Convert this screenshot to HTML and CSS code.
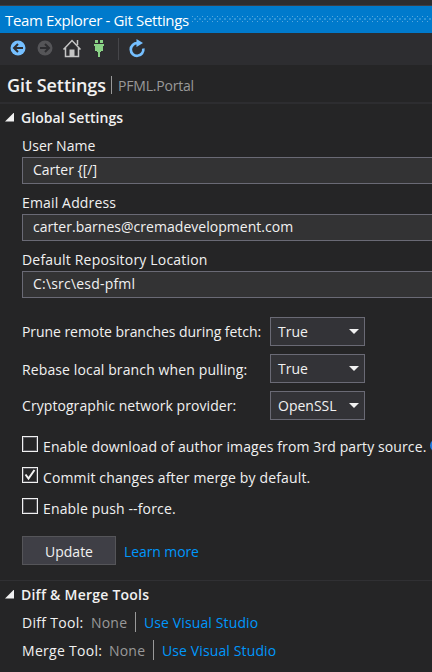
FILE: index.html
```html
<!DOCTYPE html>
<html lang="en">
<head>
<meta charset="utf-8">
<title>Team Explorer - Git Settings</title>
<link rel="stylesheet" href="styles.css">
</head>
<body>
<main class="panel">
  <header class="titlebar"><span class="title">Team Explorer - Git Settings</span>
    <svg class="grip" width="240" height="7"><defs><pattern id="dots" width="5" height="7" patternUnits="userSpaceOnUse"><path fill="#59a8dd" d="M0 1h1v1H0zM0 6h1v1H0z"/><path fill="#3094d8" d="M2 3h2v2H2z"/></pattern></defs><rect width="240" height="7" fill="url(#dots)"/></svg>
  </header>
  <nav class="toolbar">
    <svg width="112" height="32" viewBox="0 33 112 32">
      <circle cx="18" cy="48" r="7.500" fill="#75bfff"/>
      <path d="M23 48h-8M18 44l-4 4 4 4" fill="none" stroke="#2d2d30" stroke-width="2"/>
      <circle cx="45" cy="48" r="7.500" fill="#555558"/>
      <path d="M40 48h8M45 44l4 4-4 4" fill="none" stroke="#2d2d30" stroke-width="2"/>
      <path d="M65.500 48v8.500h13V48M63.500 49.500l8.500-9 8.500 9M77.500 45v-5" fill="none" stroke="#c5c5c5" stroke-width="1.500"/>
      <path d="M69.500 49.500h5V57h-5z" fill="#c5c5c5"/>
      <path d="M95 40h3v3h-3zM100 40h3v3h-3zM94 44h10v2h-1v5h-2v1h-1v5h-2v-5h-1v-1h-2v-5h-1z" fill="#89d185"/>
    </svg>
    <i class="tool-sep"></i>
    <svg class="refresh" width="20" height="32" viewBox="126 33 20 32">
      <path d="M136.500 43.200A6.300 6.300 0 1 0 142.300 48.500" fill="none" stroke="#75bfff" stroke-width="2.700"/>
      <path d="M135.500 39l6.500 4-6.500 4z" fill="#75bfff"/>
    </svg>
  </nav>
  <div class="page-head"><h1>Git Settings</h1><i class="head-sep"></i><span class="project">PFML.Portal</span></div>
  <section class="global">
    <h2><i class="expander"></i><span class="t-global">Global Settings</span></h2>
    <label class="field"><span class="caption">User Name</span><span class="input">Carter {[/]</span></label>
    <label class="field"><span class="caption t-email">Email Address</span><span class="input t-mail">carter.barnes@cremadevelopment.com</span></label>
    <label class="field"><span class="caption t-loc">Default Repository Location</span><span class="input t-path">C:\src\esd-pfml</span></label>
    <div class="choices">
      <div class="choice"><span class="t-prune">Prune remote branches during fetch:</span><span class="select">True<i class="caret"></i></span></div>
      <div class="choice rebase"><span class="t-rebase">Rebase local branch when pulling:</span><span class="select">True<i class="caret"></i></span></div>
      <div class="choice"><span class="t-crypto">Cryptographic network provider:</span><span class="select">OpenSSL<i class="caret"></i></span></div>
    </div>
    <div class="checks">
      <div class="check"><i class="box"></i><span class="t-images">Enable download of author images from 3rd party source.</span><i class="info"></i></div>
      <div class="check"><i class="box"><svg width="12" height="12"><path d="M1.500 5.500l3 4L10.500 1" fill="none" stroke="#f1f1f1" stroke-width="2"/></svg></i><span class="t-commit">Commit changes after merge by default.</span></div>
      <div class="check"><i class="box"></i><span class="t-commit">Enable push --force.</span></div>
    </div>
    <div class="actions"><span class="button">Update</span><a class="t-learn">Learn more</a></div>
  </section>
  <section class="tools">
    <h2><i class="expander"></i><span class="t-diff">Diff &amp; Merge Tools</span></h2>
    <div class="tool"><span class="tool-name diff-name">Diff Tool:</span><span class="none">None</span><i class="tool-line"></i><a class="t-vs">Use Visual Studio</a></div>
    <div class="tool"><span class="tool-name merge-name">Merge Tool:</span><span class="none">None</span><i class="tool-line"></i><a class="t-vs">Use Visual Studio</a></div>
  </section>
</main>
</body>
</html>
```
FILE: styles.css
```css
* { box-sizing: border-box; }
body { margin: 0; background: #252526; color: #f1f1f1; font: 14px/20px "Open Sans", sans-serif; overflow: hidden; }
i { font-style: normal; flex-shrink: 0; }
svg { display: block; flex-shrink: 0; }
h1, h2 { margin: 0; }
a { color: #0097fb; }
.panel { width: 432px; height: 672px; overflow: hidden; white-space: nowrap; border-top: 5px solid #2d2d30; }
.titlebar { height: 28px; border-top: 1px solid #3f3f46; background: #007acc; display: flex; align-items: center; padding-left: 5px; color: #fff; }
.title { width: 193px; font-size: 15px; letter-spacing: -.36px; }
.grip { margin-top: -2px; }
.toolbar { height: 32px; background: #2d2d30; display: flex; align-items: center; }
.tool-sep { width: 1px; height: 22px; background: #46464a; margin: 0 8px 0 6px; }
.page-head { height: 39px; border-bottom: 2px solid #2d2d30; display: flex; align-items: center; padding: 3px 0 0 7px; }
h1 { width: 104px; font-size: 18px; font-weight: 600; letter-spacing: -.05px; }
.head-sep { width: 1px; height: 18px; background: #999; margin-right: 6px; }
.project { color: #999; letter-spacing: -.2px; padding-top: 2px; }
h2 { height: 27px; display: flex; align-items: center; font-size: 14px; font-weight: 600; }
.expander { width: 9px; height: 9px; margin: -1px 7px 0 5px; background: #f1f1f1; clip-path: polygon(100% 0, 100% 100%, 0 100%); }
.field { display: flex; flex-direction: column; height: 57px; margin-left: 22px; padding-top: 5px; }
.caption { height: 21px; }
.input { height: 27px; border: 1px solid #6a6a75; border-right: 0; background: #333334; padding: 2px 0 0 10px; }
.choices { padding: 15px 0 0 22px; }
.choice { height: 37px; display: flex; align-items: flex-start; }
.choice > span:first-child { width: 248px; padding-top: 5px; }
.rebase > span:first-child { padding-top: 6px; }
.select { width: 95px; height: 29px; border: 1px solid #6a6a75; background: #333337; display: flex; align-items: center; justify-content: space-between; padding: 0 5px 0 7px; }
.caret { width: 10px; height: 5px; background: #f1f1f1; clip-path: polygon(0 0, 100% 0, 50% 100%); }
.checks { padding: 8px 0 0 22px; }
.check { height: 31px; display: flex; align-items: flex-start; }
.check > span { margin-left: 5px; padding-top: 1px; }
.box { width: 16px; height: 16px; border: 1px solid #f1f1f1; outline: 1px solid #55555a; outline-offset: -2px; padding: 1px; }
.info { width: 13px; height: 13px; border-radius: 50%; background: #1e7be0; margin: 3px 0 0 4px; }
.actions { height: 51px; display: flex; align-items: flex-start; padding: 7px 0 0 22px; }
.button { width: 94px; height: 29px; border: 1px solid #555559; background: #3f3f46; text-align: center; line-height: 29px; margin-right: 8px; }
.actions a { padding-top: 6px; }
.tools { border-top: 1px solid #303033; }
.tool { height: 28px; display: flex; align-items: center; padding-left: 22px; }
.tool > span, .tool > a { padding-top: 1px; }
.tool-name { letter-spacing: .3px; }
.diff-name { width: 69px; }
.merge-name { width: 87px; }
.none { width: 44px; color: #999; letter-spacing: .2px; }
.tool-line { width: 1px; height: 20px; background: #999; margin-right: 8px; }

/* Tracking per label */
.t-global { letter-spacing: .07px; }
.t-email { letter-spacing: .15px; }
.t-loc { letter-spacing: .19px; }
.t-mail { letter-spacing: .03px; }
.t-path { letter-spacing: .2px; }
.t-prune { letter-spacing: -.06px; }
.t-rebase { letter-spacing: .12px; }
.t-crypto { letter-spacing: .07px; }
.t-images { letter-spacing: .11px; }
.t-commit { letter-spacing: .14px; }
.t-learn { letter-spacing: -.1px; }
.t-diff { letter-spacing: .23px; }
.t-vs { letter-spacing: .12px; }
```
